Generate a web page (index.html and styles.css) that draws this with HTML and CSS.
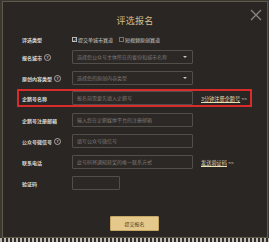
FILE: index.html
```html
<!DOCTYPE html>
<html lang="zh-CN">
<head>
    <meta charset="UTF-8">
    <meta name="viewport" content="width=device-width, initial-scale=1.0">
    <title>评选报名</title>
    <link rel="stylesheet" href="styles.css">
</head>
<body>
    <div class="modal">
        <div class="modal-head">
            <h1>评选报名</h1>
            <span class="close">
                <svg width="12" height="12" viewBox="0 0 12 12"><path d="M1 1 L11 11 M11 1 L1 11" stroke="#8a8782" stroke-width="1.3" fill="none"/></svg>
            </span>
        </div>

        <div class="form">
            <div class="row row-check">
                <span class="label">评选类型</span>
                <label class="check"><span class="box on">&#10003;</span>提交单城市赛道</label>
                <label class="check"><span class="box"></span>短视频原创赛道</label>
            </div>

            <div class="row">
                <span class="label">报名城市 <span class="help">?</span></span>
                <div class="field select">选择您公众号主体所在的省份和城市名称<span class="arrow"></span></div>
            </div>

            <div class="row">
                <span class="label">原创内容类型 <span class="help">?</span></span>
                <div class="field select">选择您的原创内容类型<span class="arrow"></span></div>
            </div>

            <div class="row hl">
                <span class="label">企鹅号名称</span>
                <div class="field">报名前需要先填入企鹅号</div>
                <a class="link"><u>3分钟注册企鹅号</u> <span class="more">&gt;&gt;</span></a>
            </div>

            <div class="row">
                <span class="label">企鹅号注册邮箱</span>
                <div class="field">输入您在企鹅媒体平台的注册邮箱</div>
            </div>

            <div class="row">
                <span class="label">公众号微信号 <span class="help">?</span></span>
                <div class="field">填写公众号微信号</div>
            </div>

            <div class="row">
                <span class="label">联系电话</span>
                <div class="field">此号码将通知获奖的唯一联系方式</div>
                <a class="link"><u>发送验证码</u> <span class="more">&gt;&gt;</span></a>
            </div>

            <div class="row">
                <span class="label">验证码</span>
                <div class="field short"></div>
            </div>
        </div>

        <div class="actions">
            <button>提交报名</button>
        </div>
    </div>
    <div class="backdrop"></div>
</body>
</html>
```

FILE: styles.css
```css
body {
    margin: 0;
    width: 269px;
    height: 242px;
    background: #3b3733;
    font-family: "Noto Sans CJK SC", "Noto Sans", sans-serif;
    overflow: hidden;
}
.modal {
    box-sizing: border-box;
    width: 266px;
    height: 237px;
    margin: 1px 0 0 2px;
    border: 1px solid #5f5a47;
    background: #2a2624;
    position: relative;
}
.modal-head {
    height: 32px;
    text-align: center;
}
.modal-head h1 {
    margin: 0;
    padding-top: 13px;
    font-size: 9px;
    line-height: 12px;
    font-weight: normal;
    color: #d6bd86;
    letter-spacing: 0.3px;
}
.close {
    position: absolute;
    top: 7px;
    right: 5px;
    width: 12px;
    height: 12px;
}
.close svg {
    display: block;
}
.form {
    display: flex;
    flex-direction: column;
    gap: 7px;
    padding-left: 19px;
}
.row {
    display: flex;
    align-items: center;
    height: 14px;
}
.row-check {
    height: 10px;
    margin-bottom: -1px;
}
.label {
    width: 50px;
    flex-shrink: 0;
    font-size: 5px;
    font-weight: bold;
    color: #dedad4;
    display: flex;
    align-items: center;
    gap: 2px;
    white-space: nowrap;
}
.help {
    display: inline-block;
    width: 5px;
    height: 5px;
    border: 1px solid #aaa;
    border-radius: 50%;
    font-size: 4px;
    line-height: 5px;
    text-align: center;
    color: #bbb;
}
.check {
    display: flex;
    align-items: center;
    font-size: 5px;
    color: #d2cdc7;
    margin-right: 6px;
}
.box {
    box-sizing: border-box;
    width: 5px;
    height: 5px;
    border: 1px solid #77736e;
    margin-right: 1px;
    font-size: 5px;
    line-height: 3px;
    color: #ddd;
    overflow: visible;
}
.box.on {
    border-color: #bdb8b1;
}
.field {
    box-sizing: border-box;
    width: 121px;
    height: 14px;
    border: 1px solid #524e4a;
    border-radius: 1px;
    background: #2c2826;
    font-size: 5px;
    line-height: 12px;
    color: #7c7772;
    padding-left: 4px;
    white-space: nowrap;
    overflow: hidden;
    position: relative;
}
.field.short {
    width: 48px;
}
.arrow {
    position: absolute;
    right: 5px;
    top: 5px;
    width: 0;
    height: 0;
    border-left: 2px solid transparent;
    border-right: 2px solid transparent;
    border-top: 2px solid #c9c5c0;
}
.link {
    margin-left: 8px;
    font-size: 5.2px;
    color: #ebdfb4;
    white-space: nowrap;
}
.more {
    color: #c9c3b8;
}
.row.hl {
    box-sizing: border-box;
    height: 18px;
    width: 235px;
    margin: -3px 0 -1px -5px;
    padding-left: 3px;
    border: 2px solid #d92a2c;
}
.actions {
    text-align: center;
    margin-top: 17px;
    padding-right: 1px;
}
button {
    width: 49px;
    height: 15px;
    padding: 0;
    border: 1px solid #c6a766;
    border-radius: 1px;
    background: #e4c88c;
    color: #4b3b22;
    font-family: "Noto Sans CJK SC", sans-serif;
    font-size: 5px;
}
.backdrop {
    height: 4px;
    background: repeating-linear-gradient(90deg, #bdbab3 0 2px, #2e2b28 2px 4px);
}
```
